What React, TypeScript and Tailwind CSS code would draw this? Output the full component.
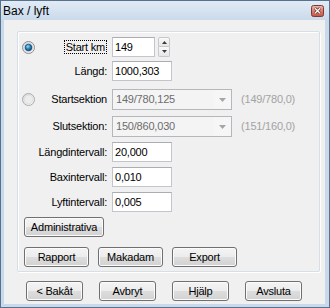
import React from "react";

function Radio({ checked }: { checked?: boolean }) {
  return (
    <svg width="13" height="13" viewBox="0 0 13 13" className="shrink-0">
      <defs>
        <linearGradient id={checked ? "rgc" : "rgu"} x1="0" y1="0" x2="1" y2="1">
          <stop offset="0" stopColor="#d8d8d8" />
          <stop offset="1" stopColor="#fbfbfb" />
        </linearGradient>
        <radialGradient id="rdot" cx="0.4" cy="0.35" r="0.7">
          <stop offset="0" stopColor="#9fdcff" />
          <stop offset="0.45" stopColor="#2e8fcf" />
          <stop offset="1" stopColor="#0b3f66" />
        </radialGradient>
      </defs>
      <circle cx="6.5" cy="6.5" r="6" fill={`url(#${checked ? "rgc" : "rgu"})`} stroke={checked ? "#8a8f94" : "#a7abaf"} />
      <circle cx="6.5" cy="6.5" r="4.3" fill={checked ? "#eef1f4" : "#ececec"} stroke={checked ? "#c8ccd0" : "#dcdcdc"} strokeWidth="0.8" />
      {checked && <circle cx="6.5" cy="6.5" r="3.3" fill="url(#rdot)" stroke="#123c5c" strokeWidth="0.7" />}
    </svg>
  );
}

function TextBox({ value, w }: { value: string; w: string }) {
  return (
    <div
      className={`${w} h-[20px] ml-[5px] bg-white border border-[#c2c6cc] border-t-[#abadb3] pl-[2px] flex items-center leading-none`}
    >
      {value}
    </div>
  );
}

function Spin() {
  return (
    <div className="ml-[3px] w-[12px] h-[20px] flex flex-col">
      <div className="h-[10px] border border-[#c6c9cc] rounded-t-[2px] bg-[linear-gradient(to_bottom,#fafafa,#e6e6e6)] flex items-center justify-center">
        <svg width="5" height="3" viewBox="0 0 5 3">
          <path d="M2.5 0 L5 3 L0 3 Z" fill="#3c3c3c" />
        </svg>
      </div>
      <div className="h-[10px] border border-[#c6c9cc] border-t-0 rounded-b-[2px] bg-[linear-gradient(to_bottom,#fafafa,#e6e6e6)] flex items-center justify-center">
        <svg width="5" height="3" viewBox="0 0 5 3">
          <path d="M0 0 L5 0 L2.5 3 Z" fill="#3c3c3c" />
        </svg>
      </div>
    </div>
  );
}

function Combo({ value }: { value: string }) {
  return (
    <div className="ml-[5px] w-[120px] h-[21px] border border-[#b4b8bc] bg-[#f4f4f4] flex items-center">
      <span className="flex-1 pl-[3px] text-[#6d6d6d] leading-none">{value}</span>
      <div className="w-[17px] h-full bg-[#f6f6f6] flex items-center justify-center">
        <svg width="7" height="4" viewBox="0 0 7 4">
          <path d="M0 0 L7 0 L3.5 4 Z" fill="#a6a6a6" />
        </svg>
      </div>
    </div>
  );
}

function Btn({ children, w }: { children: React.ReactNode; w: string }) {
  return (
    <button
      type="button"
      className={`${w} h-[20px] rounded-[3px] border border-[#707070] bg-[linear-gradient(to_bottom,#f4f4f4_0%,#ececec_50%,#dedede_50%,#d2d2d2_100%)] shadow-[inset_0_0_0_1px_#fbfbfb] flex items-center justify-center leading-none text-[11px] tracking-[-0.2px] text-black`}
    >
      {children}
    </button>
  );
}

function CloseBtn() {
  return (
    <svg width="13" height="12" viewBox="0 0 13 12">
      <defs>
        <linearGradient id="cg" x1="0" y1="0" x2="0" y2="1">
          <stop offset="0" stopColor="#ecb9af" />
          <stop offset="0.5" stopColor="#d6806f" />
          <stop offset="1" stopColor="#c4513f" />
        </linearGradient>
      </defs>
      <rect x="0.5" y="0.5" width="12" height="11" rx="2" fill="url(#cg)" stroke="#7b3a33" />
      <path d="M4 3.2 L9 8.2 M9 3.2 L4 8.2" stroke="#5a1f18" strokeWidth="2.6" />
      <path d="M4 3.2 L9 8.2 M9 3.2 L4 8.2" stroke="#ffffff" strokeWidth="1.3" />
    </svg>
  );
}

function LabelCol({ children, radio }: { children: React.ReactNode; radio?: "on" | "off" }) {
  return (
    <div className={`w-[89px] pl-[4px] flex items-center ${radio ? "justify-between" : "justify-end"}`}>
      {radio && <Radio checked={radio === "on"} />}
      {children}
    </div>
  );
}

export default function App() {
  return (
    <div className="w-[330px] h-[308px] border border-[#56728f] bg-[#c9d9ea] flex flex-col font-['Liberation_Sans',Arial,sans-serif] text-[11px] tracking-[-0.2px] text-black select-none">
      <div className="h-[19px] flex items-center justify-between pl-[2px] pr-[5px] bg-[linear-gradient(to_bottom,#e1ebf5,#cadaeb)]">
        <span className="text-[12px] leading-none tracking-normal">Bax / lyft</span>
        <CloseBtn />
      </div>
      <div className="ml-[3px] mr-[4px] mb-[3px] h-[284px] bg-[#f0f0f0] flex flex-col">
        <div className="mt-[11px] ml-[13px] mr-[5px] border border-[#d5dfe5] rounded-[2px] shadow-[inset_1px_1px_0_#ffffff,1px_1px_0_#ffffff] pt-[5px] pb-[4px] flex flex-col">
          <div className="flex items-center h-[20px]">
            <LabelCol radio="on">
              <span className="border border-dotted border-black px-[1px] leading-[12px]">Start km</span>
            </LabelCol>
            <TextBox value="149" w="w-[43px]" />
            <Spin />
          </div>
          <div className="flex items-center h-[20px] mt-[4px]">
            <LabelCol>
              <span>Längd:</span>
            </LabelCol>
            <TextBox value="1000,303" w="w-[60px]" />
          </div>
          <div className="flex items-center h-[21px] mt-[8px]">
            <LabelCol radio="off">
              <span>Startsektion</span>
            </LabelCol>
            <Combo value="149/780,125" />
            <span className="ml-[9px] text-[#a3a3a3]">(149/780,0)</span>
          </div>
          <div className="flex items-center h-[21px] mt-[6px]">
            <LabelCol>
              <span>Slutsektion:</span>
            </LabelCol>
            <Combo value="150/860,030" />
            <span className="ml-[9px] text-[#a3a3a3]">(151/160,0)</span>
          </div>
          <div className="flex items-center h-[20px] mt-[5px]">
            <LabelCol>
              <span>Längdintervall:</span>
            </LabelCol>
            <TextBox value="20,000" w="w-[60px]" />
          </div>
          <div className="flex items-center h-[20px] mt-[5px]">
            <LabelCol>
              <span>Baxintervall:</span>
            </LabelCol>
            <TextBox value="0,010" w="w-[60px]" />
          </div>
          <div className="flex items-center h-[20px] mt-[5px]">
            <LabelCol>
              <span>Lyftintervall:</span>
            </LabelCol>
            <TextBox value="0,005" w="w-[60px]" />
          </div>
          <div className="flex mt-[5px] ml-[6px]">
            <Btn w="w-[80px]">Administrativa</Btn>
          </div>
          <div className="flex mt-[10px] ml-[6px] gap-[9px]">
            <Btn w="w-[65px]">Rapport</Btn>
            <Btn w="w-[65px]">Makadam</Btn>
            <Btn w="w-[65px]">Export</Btn>
          </div>
        </div>
        <div className="mt-[9px] pl-[22px] flex gap-[16px]">
          <Btn w="w-[57px]">&lt; Bakåt</Btn>
          <Btn w="w-[57px]">Avbryt</Btn>
          <Btn w="w-[57px]">Hjälp</Btn>
          <Btn w="w-[57px]">Avsluta</Btn>
        </div>
      </div>
    </div>
  );
}
